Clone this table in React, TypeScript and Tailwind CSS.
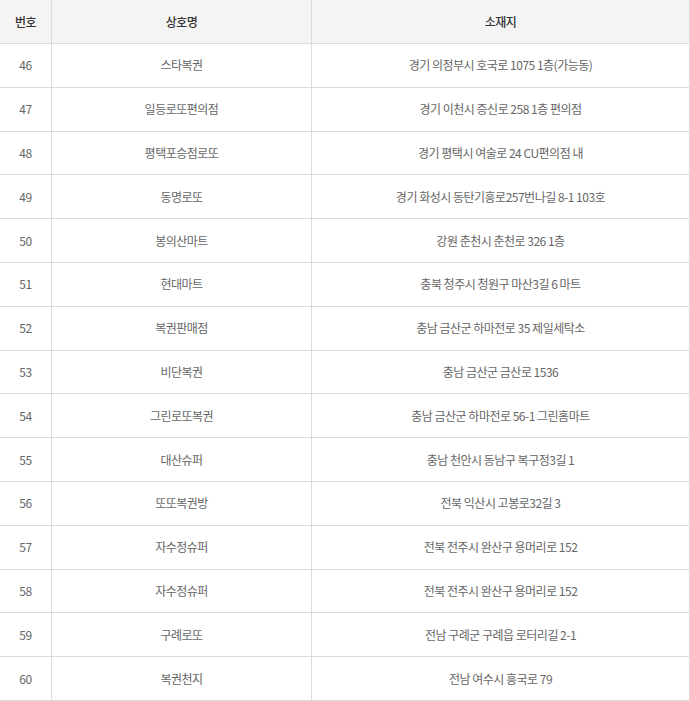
import React from "react";

const rows: [string, string, string][] = [
  ["46", "스타복권", "경기 의정부시 호국로 1075 1층(가능동)"],
  ["47", "일등로또편의점", "경기 이천시 증신로 258 1층 편의점"],
  ["48", "평택포승점로또", "경기 평택시 여술로 24 CU편의점 내"],
  ["49", "동명로또", "경기 화성시 동탄기흥로257번나길 8-1 103호"],
  ["50", "봉의산마트", "강원 춘천시 춘천로 326 1층"],
  ["51", "현대마트", "충북 청주시 청원구 마산3길 6 마트"],
  ["52", "복권판매점", "충남 금산군 하마전로 35 제일세탁소"],
  ["53", "비단복권", "충남 금산군 금산로 1536"],
  ["54", "그린로또복권", "충남 금산군 하마전로 56-1 그린홈마트"],
  ["55", "대산슈퍼", "충남 천안시 동남구 복구정3길 1"],
  ["56", "또또복권방", "전북 익산시 고봉로32길 3"],
  ["57", "자수정슈퍼", "전북 전주시 완산구 용머리로 152"],
  ["58", "자수정슈퍼", "전북 전주시 완산구 용머리로 152"],
  ["59", "구례로또", "전남 구례군 구례읍 로터리길 2-1"],
  ["60", "복권천지", "전남 여수시 흥국로 79"],
];

export default function App() {
  return (
    <div
      className="w-[690px] bg-white"
      style={{ fontFamily: '"Noto Sans CJK KR", "Noto Sans", sans-serif' }}
    >
      <div className="w-[690px] border-r border-[#dcdcdc]">
        <div className="grid grid-cols-[52px_260px_1fr] h-[44px] bg-[#f4f4f4] border-b border-[#dcdcdc] text-[12px] text-[#333] font-medium tracking-[-0.5px]">
          <div className="flex items-center justify-center border-r border-[#dcdcdc]">번호</div>
          <div className="flex items-center justify-center border-r border-[#dcdcdc]">상호명</div>
          <div className="flex items-center justify-center">소재지</div>
        </div>
        {rows.map(([n, name, addr]) => (
          <div
            key={n}
            className="grid grid-cols-[52px_260px_1fr] h-[43.8px] border-b border-[#dcdcdc] text-[12px] text-[#666] tracking-[-0.5px]"
          >
            <div className="flex items-center justify-center border-r border-[#dcdcdc]">{n}</div>
            <div className="flex items-center justify-center border-r border-[#dcdcdc]">{name}</div>
            <div className="flex items-center justify-center">{addr}</div>
          </div>
        ))}
      </div>
    </div>
  );
}
